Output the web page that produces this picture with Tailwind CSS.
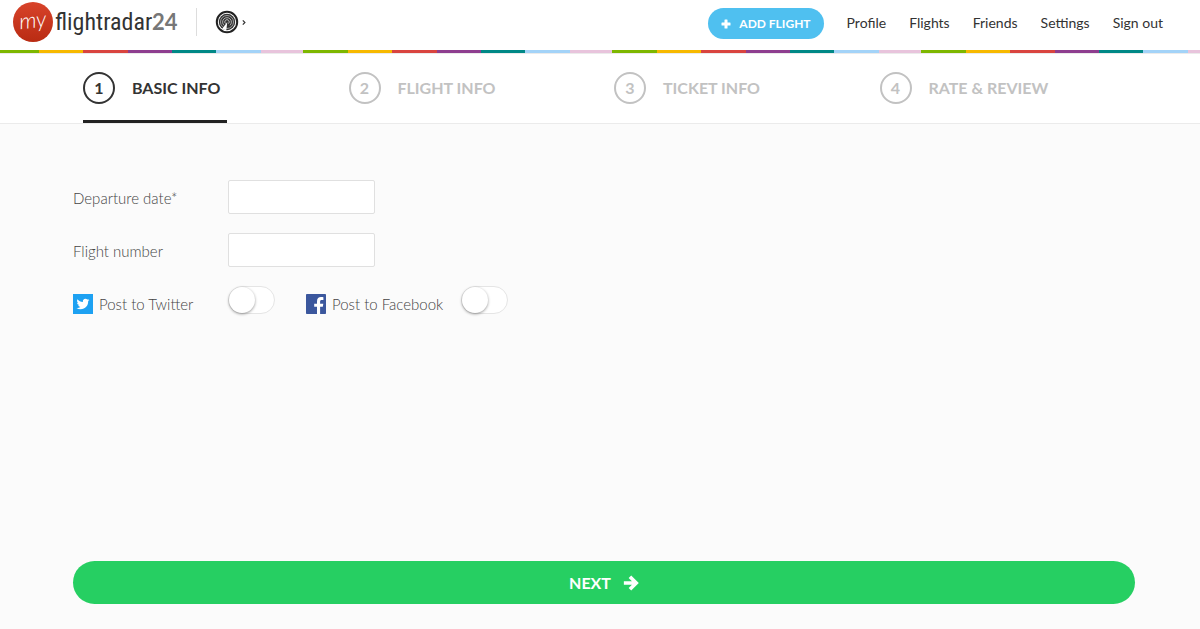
<!DOCTYPE html>
<html lang="en">
<head>
<meta charset="utf-8">
<meta name="viewport" content="width=device-width, initial-scale=1">
<title>my flightradar24 - Add flight</title>
<script src="https://cdn.jsdelivr.net/npm/@tailwindcss/browser@4"></script>
</head>
<body class="flex min-h-screen flex-col bg-[#fbfbfb] font-['Lato',sans-serif] text-[#333]">
<header class="bg-white">
  <div class="flex h-[50px] items-start justify-between pr-[37px] pl-[13px]">
    <div class="flex items-center pt-[2px]">
      <a href="#" class="flex items-center" aria-label="my flightradar24">
        <span class="flex size-10 items-center justify-center rounded-full bg-linear-to-b from-[#d8432a] to-[#b92b12] pb-1 font-['Lato',cursive] text-[22px] leading-none font-light text-white italic"><span class="-rotate-6">my</span></span>
        <span class="ml-[2px] w-[97px] font-['Roboto_Condensed','Lato',sans-serif] text-2xl leading-10 whitespace-nowrap text-[#333]">flightradar</span>
        <span class="text-[22px] leading-10 font-bold text-[#777]">24</span>
      </a>
      <span class="ml-[18px] h-7 w-px bg-[#ddd]"></span>
      <button type="button" class="ml-[18px] flex items-center gap-[3px]" aria-label="Open site menu">
        <svg class="size-6" viewBox="0 0 24 24" fill="none" stroke="#222">
          <circle cx="12" cy="12" r="10.200" stroke-width="2"/>
          <circle cx="12" cy="12" r="8.200" fill="#333" stroke="none"/>
          <circle cx="12" cy="12" r="6.500" stroke="#aaa" stroke-width=".9"/>
          <path d="M9 15.300A4.400 4.400 0 1 1 15 15.300" stroke="#bbb" stroke-width=".9"/>
          <path d="M10.600 13.600A2.200 2.200 0 1 1 13.400 13.600" stroke="#ccc" stroke-width=".9"/>
          <path d="M12.300 12L7.300 18.800Q9.200 20.200 11.300 20.100Z" fill="#fff" stroke="none"/>
        </svg>
        <svg class="h-[5px] w-1" viewBox="0 0 4 5" fill="none" stroke="#333" stroke-width="1.200"><path d="M.8.4L2.900 2.500.8 4.600"/></svg>
      </button>
    </div>
    <nav class="flex items-center gap-[23px] pt-2 text-sm text-[#333]">
      <button type="button" class="flex h-[31px] items-center gap-2 rounded-full bg-[#4fc0f0] px-[13px] text-xs font-bold text-white">
        <svg class="size-[10px]" viewBox="0 0 10 10" fill="#fff"><path d="M4 .5h2a.5.5 0 0 1 .5.5v2.500H9a.5.5 0 0 1 .5.5v2a.5.5 0 0 1-.5.5H6.500V9a.5.5 0 0 1-.5.5H4a.5.5 0 0 1-.5-.5V6.500H1A.5.5 0 0 1 .5 6V4a.5.5 0 0 1 .5-.5h2.500V1A.5.5 0 0 1 4 .5Z"/></svg>
        ADD FLIGHT
      </button>
      <a href="#" class="pb-[2px]">Profile</a><a href="#" class="pb-[2px]">Flights</a><a href="#" class="pb-[2px]">Friends</a><a href="#" class="pb-[2px]">Settings</a><a href="#" class="pb-[2px]">Sign out</a>
    </nav>
  </div>
  <div class="h-[3px] bg-[repeating-linear-gradient(90deg,#7db700_0_45px,#f7b900_45px_89px,#d9443f_89px_134px,#8e3e8f_134px_178px,#008886_178px_222px,#a3d3f8_222px_267px,#e8c4dc_267px_309px)] bg-position-[-6px_0] bg-size-[309px_3px]"></div>
</header>
<ol class="grid grid-cols-4 border-y border-[#ebebeb] bg-white pr-[65px] pl-[73px] text-base font-bold text-[#c2c2c2]">
  <li class="flex pl-[10px]"><a href="#" aria-current="step" class="flex h-[69px] items-center gap-[17px] border-b-3 border-[#222] pt-[2px] pr-[7px] whitespace-nowrap text-[#333]"><span class="flex size-8 items-center justify-center rounded-full border-2 border-[#333]">1</span>BASIC INFO</a></li>
  <li class="flex pl-[10px]"><a href="#" class="flex h-[69px] items-center gap-[17px] border-b-3 border-transparent pt-[2px] whitespace-nowrap"><span class="flex size-8 items-center justify-center rounded-full border-2 border-[#c2c2c2]">2</span>FLIGHT INFO</a></li>
  <li class="flex pl-[10px]"><a href="#" class="flex h-[69px] items-center gap-[17px] border-b-3 border-transparent pt-[2px] whitespace-nowrap"><span class="flex size-8 items-center justify-center rounded-full border-2 border-[#c2c2c2]">3</span>TICKET INFO</a></li>
  <li class="flex pl-[10px]"><a href="#" class="flex h-[69px] items-center gap-[17px] border-b-3 border-transparent pt-[2px] whitespace-nowrap"><span class="flex size-8 items-center justify-center rounded-full border-2 border-[#c2c2c2]">4</span>RATE &amp; REVIEW</a></li>
</ol>
<form class="flex grow flex-col justify-between pt-14 pr-[65px] pb-[25px] pl-[73px]">
  <div class="flex flex-col gap-[19px] text-[15px] font-light text-[#444]">
    <div class="flex items-center">
      <label for="date" class="w-[155px] pt-[2px]">Departure date*</label>
      <input id="date" type="text" class="h-[34px] w-[147px] rounded-xs border border-[#e0e0e0] bg-white px-2">
    </div>
    <div class="flex items-center">
      <label for="flight" class="w-[155px] pt-[2px]">Flight number</label>
      <input id="flight" type="text" class="h-[34px] w-[147px] rounded-xs border border-[#e0e0e0] bg-white px-2">
    </div>
    <div class="flex items-start">
      <label for="twitter" class="flex w-[155px] items-center gap-[6px] pt-[7px]">
        <svg class="size-5" viewBox="0 0 20 20"><path fill="#1da1f2" d="M0 0h20v20H0z"/><path fill="#fff" transform="translate(3.500 3.500) scale(.54)" d="M23.950 4.570a10 10 0 0 1-2.820.77 4.960 4.960 0 0 0 2.160-2.720c-.95.55-2 .95-3.130 1.180a4.920 4.920 0 0 0-8.380 4.480C7.690 8.100 4.070 6.130 1.640 3.160a4.920 4.920 0 0 0 1.520 6.570 4.900 4.900 0 0 1-2.230-.61v.06a4.920 4.920 0 0 0 3.950 4.830 5 5 0 0 1-2.210.08 4.940 4.940 0 0 0 4.600 3.420A9.870 9.870 0 0 1 0 19.540a14 14 0 0 0 7.550 2.210c9.050 0 14-7.500 14-13.980l-.02-.64a9.900 9.900 0 0 0 2.420-2.560z"/></svg>
        Post to Twitter
      </label>
      <input id="twitter" type="checkbox" role="switch" class="h-7 w-[47px] appearance-none rounded-full border border-[#e5e5e5] bg-white before:block before:size-[26px] before:rounded-full before:bg-white before:shadow-[0_1px_3px_#0006] checked:before:ml-[19px]">
      <label for="facebook" class="ml-[31px] flex w-[155px] items-center gap-[6px] pt-[7px]">
        <svg class="size-5" viewBox="0 0 20 20"><rect width="20" height="20" rx=".8" fill="#3b579d"/><path fill="#fff" d="M11 20v-7.300H8.200V9.700H11V7.200c0-2.800 1.600-4.200 4-4.200 1.200 0 2 .1 2.400.2v2.700h-1.600c-1.300 0-1.700.7-1.700 1.600v2.200h3.200l-.5 3h-2.700V20z"/></svg>
        Post to Facebook
      </label>
      <input id="facebook" type="checkbox" role="switch" class="h-7 w-[47px] appearance-none rounded-full border border-[#e5e5e5] bg-white before:block before:size-[26px] before:rounded-full before:bg-white before:shadow-[0_1px_3px_#0006] checked:before:ml-[19px]">
    </div>
  </div>
  <button type="submit" class="flex h-[43px] w-full items-center justify-center gap-3 rounded-full bg-[#26cf62] text-base font-bold text-white">
    NEXT
    <svg class="size-4" viewBox="0 0 15 15" fill="none" stroke="#fff" stroke-width="3.400" stroke-linejoin="miter"><path d="M.8 7.500H12M6.500 1.600l5.900 5.900-5.900 5.900"/></svg>
  </button>
</form>
</body>
</html>
